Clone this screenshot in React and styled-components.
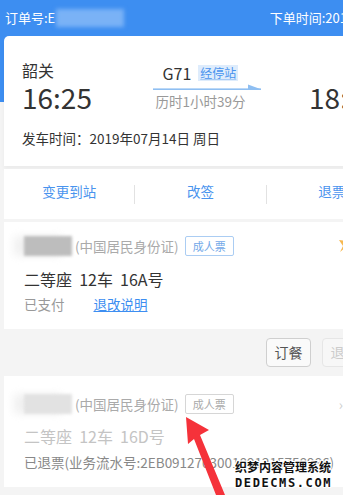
import * as React from "react";
import styled, { createGlobalStyle } from "styled-components";

const GlobalStyle = createGlobalStyle`
  html, body {
    margin: 0;
    padding: 0;
    background: #f4f4f4;
    overflow: hidden;
  }
  body {
    font-family: "Noto Sans CJK SC", "Noto Sans", sans-serif;
    color: #333;
  }
`;

function App() {
  return (
    <>
      <GlobalStyle />
      <Page>
        <TopBar>
          <TopText>
            订单号:E<BlurBlue />
          </TopText>
          <TopText $right>下单时间:2019-07-12</TopText>
        </TopBar>
        <Hero>
          <TripCard>
            <StationRow>
              <Station>
                <StationName>韶关</StationName>
                <StationTime>16:25</StationTime>
              </Station>
              <Middle>
                <TrainLine>
                  <TrainNo>G71</TrainNo>
                  <StopBadge>经停站</StopBadge>
                </TrainLine>
                <Arrow width="108" height="7" viewBox="0 0 108 7">
                  <path d="M0 5.2 H108 L95 0.5 V5.2 Z" fill="#8fbff2" />
                  <rect x="0" y="4.4" width="108" height="1.6" fill="#8fbff2" />
                </Arrow>
                <Duration>历时1小时39分</Duration>
              </Middle>
              <Station $end>
                <StationName $hidden>深圳</StationName>
                <StationTime>18:04</StationTime>
              </Station>
            </StationRow>
            <DepartLine>发车时间：2019年07月14日 周日</DepartLine>
          </TripCard>
        </Hero>

        <ActionBar>
          <Action>变更到站</Action>
          <Divider />
          <Action>改签</Action>
          <Divider />
          <Action>退票</Action>
        </ActionBar>

        <PassengerCard $top={12}>
          <NameRow>
            <BlurName $shade="#bdbdbd" />
            <IdType>(中国居民身份证)</IdType>
            <TicketBadge>成人票</TicketBadge>
            <SideIcon width="12" height="16" viewBox="0 0 12 16">
              <path d="M2 2 L6 8 L3 14 L9 9 L12 3 Z" fill="#f5a623" opacity="0.8" />
            </SideIcon>
          </NameRow>
          <SeatLine>二等座&nbsp;&nbsp;12车&nbsp;&nbsp;16A号</SeatLine>
          <StatusLine>
            已支付<RuleLink>退改说明</RuleLink>
          </StatusLine>
        </PassengerCard>

        <ButtonRow>
          <SmallButton>订餐</SmallButton>
          <SmallButton $disabled>退票</SmallButton>
        </ButtonRow>

        <PassengerCard $top={16} $faded>
          <NameRow>
            <BlurName $shade="#e2e2e2" />
            <IdType>(中国居民身份证)</IdType>
            <TicketBadge $faded>成人票</TicketBadge>
            <SideMark>›</SideMark>
          </NameRow>
          <SeatLine $faded>二等座&nbsp;&nbsp;12车&nbsp;&nbsp;16D号</SeatLine>
          <StatusLine $faded>已退票(业务流水号:2EB0912703001891215758986)</StatusLine>
        </PassengerCard>

        <RedArrow width="60" height="90" viewBox="0 0 60 90">
          <path
            d="M3 0 L26 13 L17 18 L42 78 L33 78 L11 22 L5 27 Z"
            fill="#f5323a"
          />
        </RedArrow>
        <Watermark>
          <WmCn>织梦内容管理系统</WmCn>
          <WmEn>DEDECMS.COM</WmEn>
        </Watermark>
      </Page>
    </>
  );
}

const Page = styled.div`
  position: relative;
  width: 401px;
  height: 495px;
`;

const TopBar = styled.div`
  display: flex;
  justify-content: space-between;
  align-items: center;
  height: 36px;
  padding: 0 0 0 5px;
  background: #3d8ef1;
  color: #fff;
`;

const TopText = styled.div`
  display: flex;
  align-items: center;
  font-size: 13px;
  line-height: 18px;
  white-space: nowrap;
  margin-right: ${(p) => (p.$right ? "9px" : "0")};
`;

const BlurBlue = styled.span`
  display: inline-block;
  width: 68px;
  height: 18px;
  margin-left: 1px;
  background: #7ab2f6;
  filter: blur(2px);
`;

const Hero = styled.div`
  padding: 0 4px;
  background: linear-gradient(#3d8ef1 0, #3d8ef1 66px, transparent 66px);
`;

const TripCard = styled.div`
  background: #fff;
  border-radius: 5px 5px 0 0;
  padding: 23px 18px 18px;
  box-shadow: 0 3px 4px rgba(0, 0, 0, 0.04);
`;

const StationRow = styled.div`
  display: flex;
  justify-content: space-between;
  align-items: center;
`;

const Station = styled.div`
  display: flex;
  flex-direction: column;
  align-items: ${(p) => (p.$end ? "flex-end" : "flex-start")};
  white-space: nowrap;
`;

const StationName = styled.div`
  font-size: 16px;
  line-height: 22px;
  color: #333;
  visibility: ${(p) => (p.$hidden ? "hidden" : "visible")};
`;

const StationTime = styled.div`
  font-size: 28px;
  line-height: 32px;
  color: #333;
`;

const Middle = styled.div`
  display: flex;
  flex-direction: column;
  align-items: flex-start;
  width: 108px;
  margin-left: 12px;
`;

const TrainLine = styled.div`
  display: flex;
  align-items: center;
  gap: 7px;
  padding-left: 10px;
  height: 20px;
`;

const TrainNo = styled.span`
  font-size: 16px;
  color: #333;
`;

const StopBadge = styled.span`
  font-size: 12px;
  line-height: 16px;
  padding: 0 2px;
  background: #deecfc;
  color: #4a94ee;
  text-decoration: underline;
  text-decoration-color: #a8cbf4;
`;

const Arrow = styled.svg`
  display: block;
  margin-top: 1px;
`;

const Duration = styled.div`
  font-size: 13.5px;
  line-height: 18px;
  margin-top: 1px;
  padding-left: 3px;
  color: #999;
  white-space: nowrap;
`;

const DepartLine = styled.div`
  margin-top: 15px;
  font-size: 13.5px;
  line-height: 20px;
  color: #333;
`;

const ActionBar = styled.div`
  display: flex;
  align-items: flex-start;
  height: 50px;
  margin: 3px 4px 0;
  background: #fff;
`;

const Action = styled.div`
  flex: 1;
  margin-top: 12px;
  text-align: center;
  font-size: 13.5px;
  line-height: 20px;
  color: #4a94ee;
`;

const Divider = styled.div`
  width: 1px;
  height: 19px;
  margin-top: 16px;
  background: #e2e2e2;
`;

const PassengerCard = styled.div`
  margin: 3px 4px 0;
  padding: ${(p) => p.$top}px 18px 15px 20px;
  background: #fff;
`;

const NameRow = styled.div`
  display: flex;
  align-items: center;
  height: 24px;
`;

const BlurName = styled.div`
  width: 48px;
  height: 20px;
  background: ${(p) => p.$shade};
  filter: blur(1.5px);
  margin-right: 3px;
  box-shadow: -10px 0 8px #f0f0f0;
`;

const IdType = styled.span`
  font-size: 13.5px;
  color: #aaa;
  white-space: nowrap;
`;

const TicketBadge = styled.span`
  margin-left: 6px;
  font-size: 11px;
  line-height: 18px;
  padding: 0 7px;
  border: 1px solid ${(p) => (p.$faded ? "#d6d6d6" : "#abcdf3")};
  border-radius: 2px;
  color: ${(p) => (p.$faded ? "#aaa" : "#72a8e8")};
  white-space: nowrap;
`;

const SideIcon = styled.svg`
  margin-left: auto;
  margin-right: 30px;
`;

const SideMark = styled.span`
  margin-left: auto;
  margin-right: 36px;
  font-size: 14px;
  color: #ccc;
`;

const SeatLine = styled.div`
  margin-top: ${(p) => (p.$faded ? 9 : 10)}px;
  font-size: 16px;
  line-height: 22px;
  color: ${(p) => (p.$faded ? "#c4c4c4" : "#333")};
  white-space: nowrap;
`;

const StatusLine = styled.div`
  margin-top: ${(p) => (p.$faded ? 5 : 4)}px;
  font-size: 13.5px;
  line-height: 20px;
  color: ${(p) => (p.$faded ? "#888" : "#999")};
  white-space: nowrap;
`;

const RuleLink = styled.span`
  margin-left: 29px;
  color: #3d8ef1;
  text-decoration: underline;
`;

const ButtonRow = styled.div`
  display: flex;
  justify-content: flex-end;
  gap: 11px;
  padding: 9px 34px 6px 0;
`;

const SmallButton = styled.div`
  width: 43px;
  height: 27px;
  border: 1px solid ${(p) => (p.$disabled ? "#e6e6e6" : "#cfcfcf")};
  border-radius: 4px;
  background: ${(p) => (p.$disabled ? "#f7f7f7" : "#fafafa")};
  color: ${(p) => (p.$disabled ? "#ccc" : "#555")};
  font-size: 14px;
  line-height: 27px;
  text-align: center;
`;

const RedArrow = styled.svg`
  position: absolute;
  left: 183px;
  top: 417px;
`;

const Watermark = styled.div`
  position: absolute;
  left: 235px;
  top: 459px;
  display: flex;
  flex-direction: column;
  font-weight: 700;
  color: #111;
  text-shadow: 1px 0 0 #fff, -1px 0 0 #fff, 0 1px 0 #fff, 0 -1px 0 #fff,
    1px 1px 0 #fff, -1px -1px 0 #fff, 1px -1px 0 #fff, -1px 1px 0 #fff;
`;

const WmCn = styled.span`
  font-size: 12px;
  line-height: 16px;
  white-space: nowrap;
`;

const WmEn = styled.span`
  font-family: "DejaVu Sans Mono", monospace;
  font-size: 12px;
  line-height: 16px;
  letter-spacing: 1.6px;
  white-space: nowrap;
`;

export default App;
